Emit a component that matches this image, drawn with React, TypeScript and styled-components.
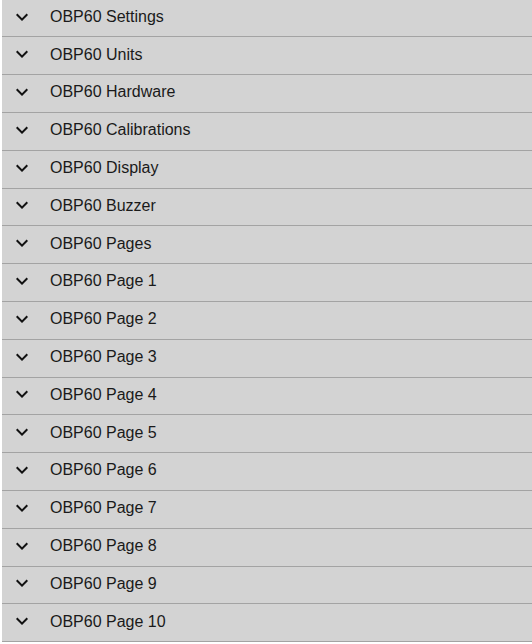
import React from "react";
import styled, { createGlobalStyle } from "styled-components";

const Global = createGlobalStyle`
  html, body { margin: 0; padding: 0; background: #ffffff; }
  body { font-family: "Liberation Sans", Arial, sans-serif; overflow: hidden; }
`;

const List = styled.div`
  display: flex;
  flex-direction: column;
  margin-top: -0.4px;
  padding-left: 2px;
`;

const Row = styled.div`
  display: flex;
  align-items: flex-start;
  box-sizing: border-box;
  height: 37.8px;
  background: #d3d3d3;
  border-bottom: 1px solid #a3a3a3;
`;

const Chevron = styled.svg`
  flex: none;
  width: 24px;
  height: 24px;
  margin-left: 7.5px;
  margin-top: 4.9px;
  fill: #111111;
`;

const Label = styled.span`
  margin-left: 16.5px;
  padding-top: 8.25px;
  font-size: 16px;
  line-height: normal;
  color: #1a1a1a;
  white-space: nowrap;
`;

const items = [
  "OBP60 Settings",
  "OBP60 Units",
  "OBP60 Hardware",
  "OBP60 Calibrations",
  "OBP60 Display",
  "OBP60 Buzzer",
  "OBP60 Pages",
  ...Array.from({ length: 10 }, (_, i) => `OBP60 Page ${i + 1}`),
];

export default function App() {
  return (
    <>
      <Global />
      <List>
        {items.map((t) => (
          <Row key={t}>
            <Chevron viewBox="0 0 24 24">
              <path d="M16.59 8.59L12 13.17 7.41 8.59 6 10l6 6 6-6z" />
            </Chevron>
            <Label>{t}</Label>
          </Row>
        ))}
      </List>
    </>
  );
}
